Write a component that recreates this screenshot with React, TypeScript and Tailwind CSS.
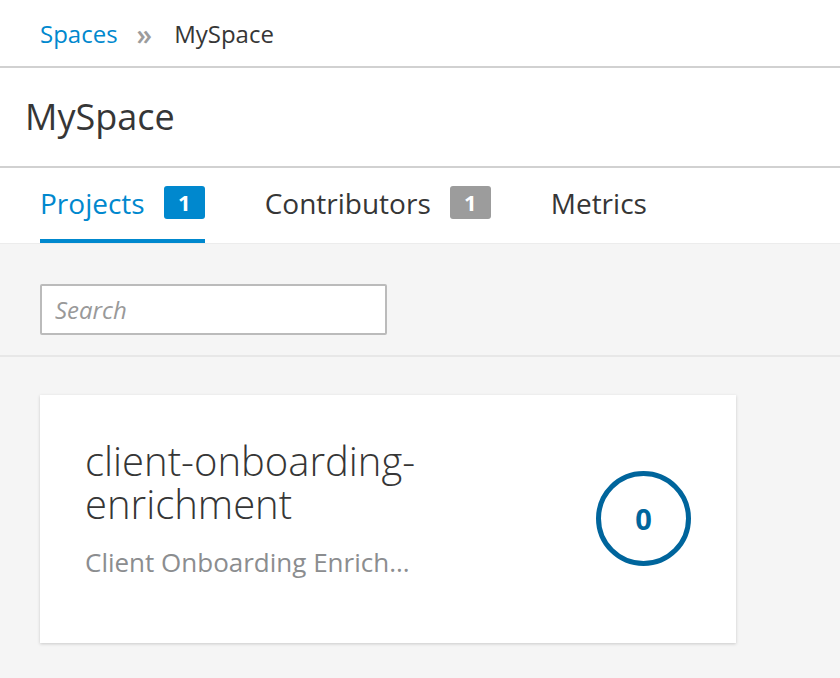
export default function App() {
    const tabs = [
        { label: 'Projects', count: 1, active: true },
        { label: 'Contributors', count: 1, active: false },
        { label: 'Metrics', count: null, active: false },
    ];

    return (
        <div className="w-[840px] h-[678px] overflow-hidden bg-[#f5f5f5] text-[#363636] font-['Open_Sans',sans-serif]">
            {/* Breadcrumb */}
            <div className="h-[68px] bg-white border-b-2 border-[#d1d1d1] flex items-center pl-10 pt-[2px] text-[24px]">
                <span className="text-[#0088ce]">Spaces</span>
                <span className="text-[#9c9c9c] ml-[19px] mr-[22px] text-[28px] font-semibold leading-none">»</span>
                <span>MySpace</span>
            </div>

            {/* Title */}
            <div className="h-[100px] bg-white border-b-2 border-[#d1d1d1] flex items-center pl-[25px]">
                <h1 className="text-[36px] leading-none">MySpace</h1>
            </div>

            {/* Tabs */}
            <div className="h-[76px] bg-white border-b border-[#ececec] flex items-end pl-10 gap-[60px]">
                {tabs.map((t) => (
                    <div
                        key={t.label}
                        className={`h-full flex items-center gap-[19px] pb-[2px] border-b-[4px] ${
                            t.active ? 'border-[#0088ce] text-[#0088ce]' : 'border-transparent text-[#363636]'
                        }`}
                    >
                        <span className="text-[28px] leading-none">{t.label}</span>
                        {t.count !== null && (
                            <span
                                className={`w-[41px] h-[33px] rounded-[3px] flex items-center justify-center text-white font-bold text-[22px] ${
                                    t.active ? 'bg-[#0088ce]' : 'bg-[#9c9c9c]'
                                }`}
                            >
                                {t.count}
                            </span>
                        )}
                    </div>
                ))}
            </div>

            {/* Toolbar */}
            <div className="px-10 pt-10 pb-5 border-b-2 border-[#e7e7e7]">
                <input
                    type="text"
                    placeholder="Search"
                    className="w-[347px] h-[51px] bg-white border-2 border-[#bbbbbb] rounded-[2px] px-[13px] text-[24px] italic placeholder-[#999999] outline-none"
                />
            </div>

            {/* Card */}
            <div className="px-10 pt-[38px]">
                <div className="w-[696px] h-[248px] bg-white shadow-[0_1px_3px_rgba(0,0,0,0.18)] flex items-start pl-[45px] pr-[45px]">
                    <div className="flex-1 pt-[44px]">
                        <div className="text-[40px] font-light leading-[43px] w-[380px]">
                            client-onboarding-
                            <br />
                            enrichment
                        </div>
                        <div className="text-[26px] text-[#8b8d8f] mt-[18px]">Client Onboarding Enrich...</div>
                    </div>
                    <div className="self-center w-[95px] h-[95px] rounded-full border-[5px] border-[#00659c] flex items-center justify-center text-[#00659c] font-bold text-[29px] leading-none mb-[2px]">
                        0
                    </div>
                </div>
            </div>
        </div>
    );
}
